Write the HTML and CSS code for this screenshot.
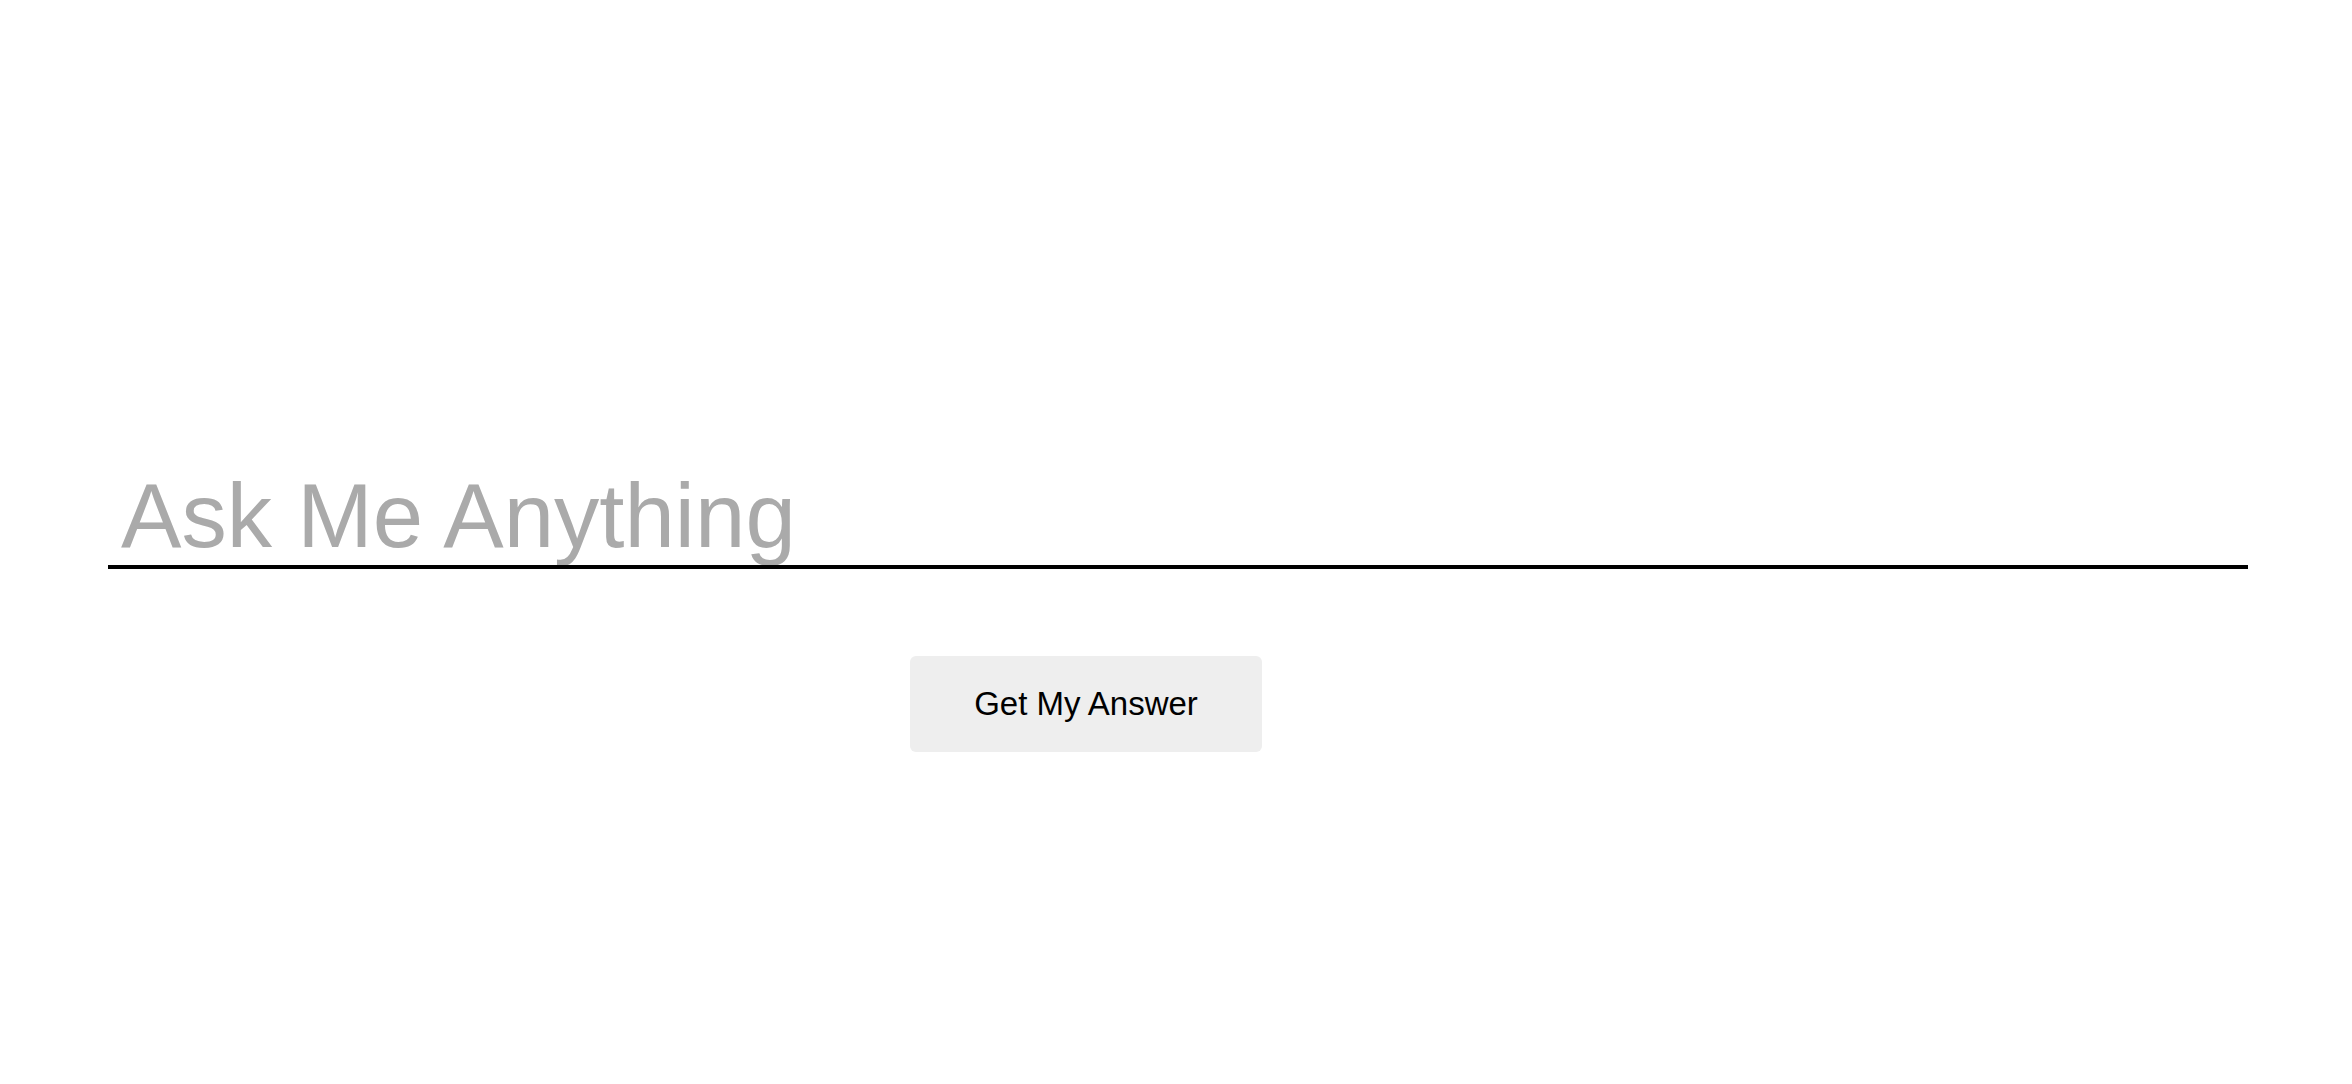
FILE: index.html
```html
<!DOCTYPE html>
<html lang="en">
<head>
<meta charset="utf-8">
<title>Ask Me Anything</title>
<link rel="stylesheet" href="styles.css">
</head>
<body>
<main class="page">
  <form class="ask-form" onsubmit="return false;">
    <input class="ask-input" type="text" placeholder="Ask Me Anything">
    <button class="ask-button" type="submit">Get My Answer</button>
  </form>
</main>
</body>
</html>
```

FILE: styles.css
```css
html, body {
  margin: 0;
  padding: 0;
  background: #ffffff;
}

.page {
  padding: 467px 0 0 108px;
  font-family: "Liberation Sans", Arial, sans-serif;
}

.ask-form {
  display: flex;
  flex-direction: column;
  align-items: flex-start;
}

.ask-input {
  box-sizing: content-box;
  width: 2115px;
  height: 98px;
  padding: 0 12px 0 13px;
  margin: 0;
  border: none;
  border-bottom: 4px solid #000000;
  outline: none;
  background: transparent;
  font-family: "Liberation Sans", Arial, sans-serif;
  font-size: 90.6px;
  color: #000000;
}

.ask-input::placeholder {
  color: #aaaaaa;
  opacity: 1;
}

.ask-button {
  margin: 87px 0 0 802px;
  width: 352px;
  height: 96px;
  border: none;
  border-radius: 6px;
  background: #eeeeee;
  color: #000000;
  font-family: "Liberation Sans", Arial, sans-serif;
  font-size: 33px;
  padding: 0;
  cursor: pointer;
}
```
